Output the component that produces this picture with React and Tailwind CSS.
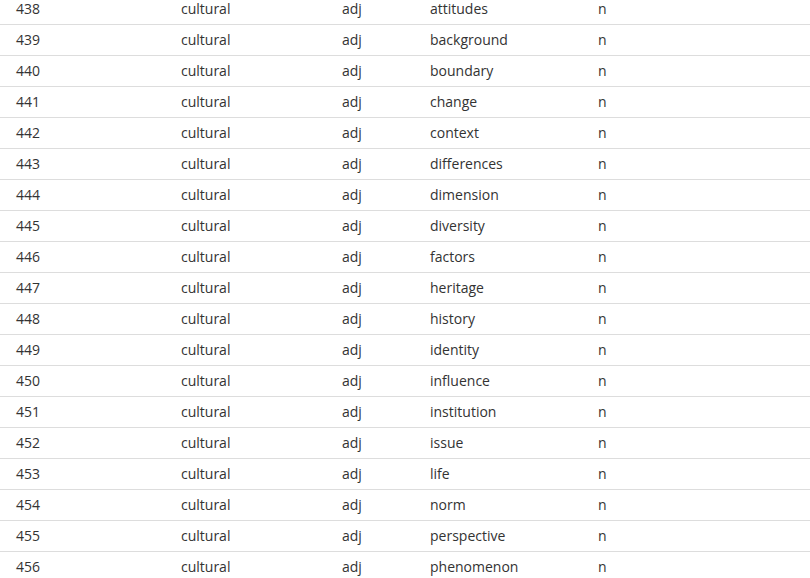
const rows = [
  [438, 'attitudes'],
  [439, 'background'],
  [440, 'boundary'],
  [441, 'change'],
  [442, 'context'],
  [443, 'differences'],
  [444, 'dimension'],
  [445, 'diversity'],
  [446, 'factors'],
  [447, 'heritage'],
  [448, 'history'],
  [449, 'identity'],
  [450, 'influence'],
  [451, 'institution'],
  [452, 'issue'],
  [453, 'life'],
  [454, 'norm'],
  [455, 'perspective'],
  [456, 'phenomenon'],
];

export default function App() {
  return (
    <div className="h-[578px] w-[810px] overflow-hidden bg-white font-['Open_Sans',sans-serif] text-[14px] text-[#333]">
      <div className="-mt-[6px]">
        {rows.map(([id, word]) => (
          <div key={id} className="flex h-[31px] items-center border-b border-[#dddddd] pb-[2px]">
            <div className="w-[181px] pl-[16px]">{id}</div>
            <div className="w-[161px]">cultural</div>
            <div className="w-[88px]">adj</div>
            <div className="w-[168px]">{word}</div>
            <div className="flex-1">n</div>
          </div>
        ))}
      </div>
    </div>
  );
}
